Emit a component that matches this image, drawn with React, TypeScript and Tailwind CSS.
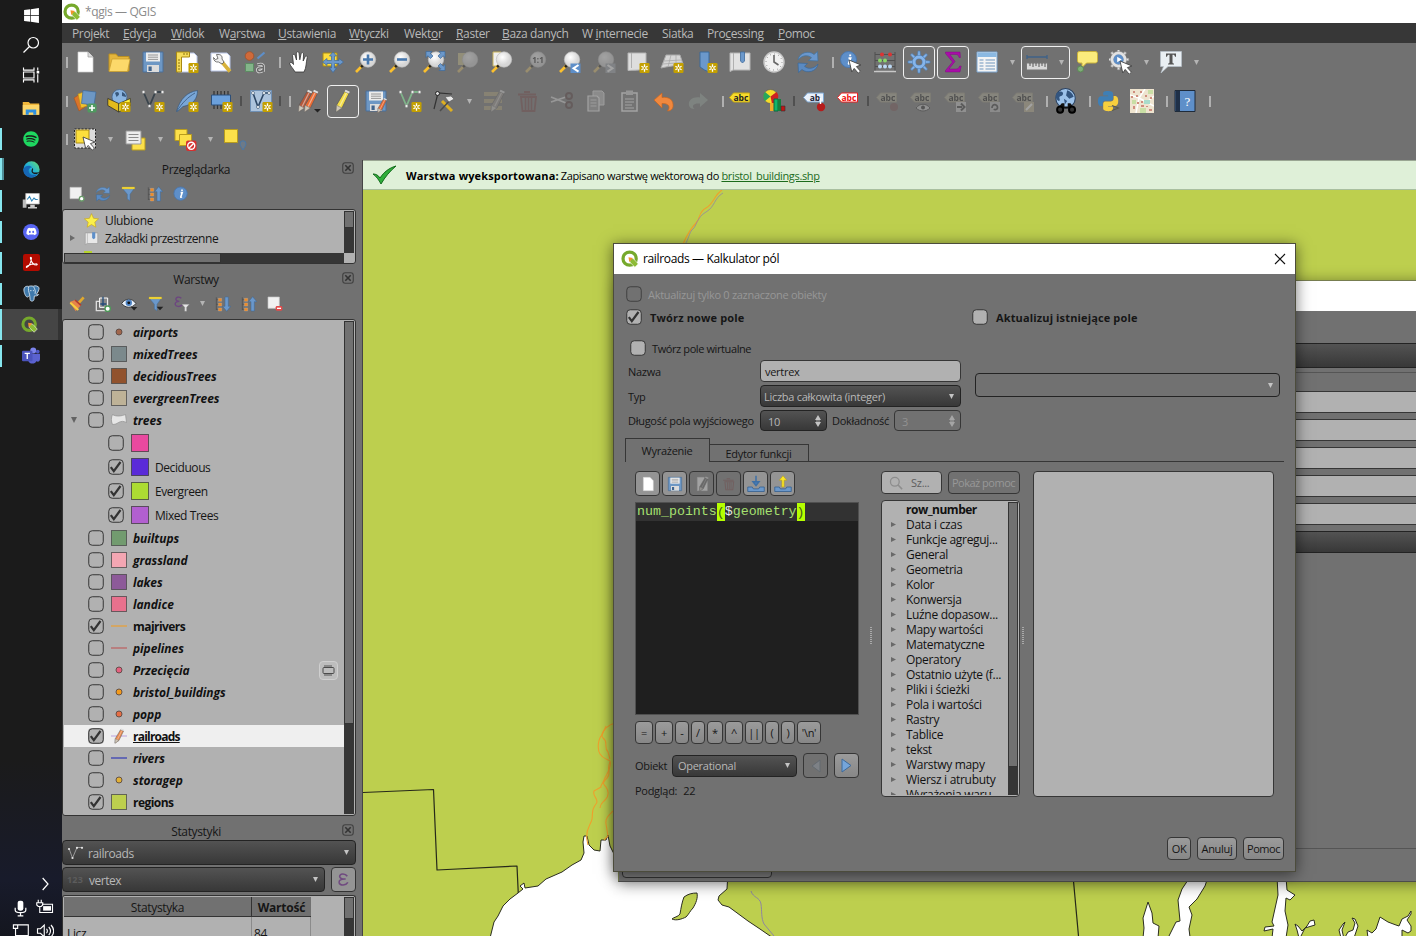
import React from "react";
import { FaSpotify, FaDiscord, FaWindows } from "react-icons/fa";

type Kids = { children?: React.ReactNode };

const S = ({ children, s = 24, dim = false }: Kids & { s?: number; dim?: boolean }) => (
  <svg width={s} height={s} viewBox="0 0 24 24" className={dim ? "shrink-0 opacity-35 grayscale-[.4]" : "shrink-0"} fill="none">
    {children}
  </svg>
);

/* ---------- shared icon parts ---------- */

const Star = ({ x = 13.5, y = 13 }: { x?: number; y?: number }) => (
  <g transform={`translate(${x} ${y})`}>
    <rect width="10" height="10" rx="1.3" fill="#c4a000" />
    <path d="M5 1.3v7.4M1.9 3.2l6.2 3.6M8.1 3.2 1.9 6.8" stroke="#fff" strokeWidth="1.3" />
    <circle cx="5" cy="5" r="1" fill="#c4a000" />
  </g>
);

const Mag = ({ children }: Kids) => (
  <>
    <path d="M8.5 15.5 2 22" stroke="#fbc02d" strokeWidth="2.6" />
    <path d="m7 15.4 1.8 1.8" stroke="#222" strokeWidth="2.4" />
    <circle cx="14" cy="9.5" r="7.7" fill="url(#lens)" stroke="#bcbcbc" strokeWidth=".7" />
    {children}
  </>
);

const Arrow = ({ x = 0, y = 0 }: { x?: number; y?: number }) => (
  <path transform={`translate(${x} ${y})`} d="M10 10l12 5-4.6 1.6 4 4.6-2.2 2-4-4.8-2.4 3.6z" fill="#fff" stroke="#444" strokeWidth=".9" />
);

const Pencil = ({ fill, x = 0 }: { fill: string; x?: number }) => (
  <g transform={`translate(${x} 0)`}>
    <path d="M13.5 2.5 18 4.5 11 19 5 23l.5-6.8z" fill={fill} stroke="#5d5d5d" strokeWidth=".8" />
    <path d="m15.500 3.800-7 14" stroke="#fff" strokeOpacity=".45" strokeWidth="1.200" />
    <path d="m5.500 16.200 5.300 2.800L5 23z" fill="#cfc7b8" stroke="#777" strokeWidth=".6" />
    <path d="m13.500 2.500 4.500 2 .8-1.800-4.200-1.900z" fill="#ddd" />
  </g>
);

const Tag = ({ fill, stroke, color, text }: { fill: string; stroke: string; color: string; text: string }) => (
  <>
    <path d="M1.500 8.500 5.500 4h16v9h-16z" fill={fill} stroke={stroke} strokeWidth="1" />
    <text x="12.900" y="11.500" textAnchor="middle" fontSize="8.500" fontWeight="700" fontFamily="Open Sans, sans-serif" fill={color}>{text}</text>
  </>
);

const RefreshIcon = ({ s }: { s?: number }) => (
  <S s={s}>
    <path d="M2 10C3 2.500 13 0 18 4.500l3.500-3 .5 9.500-9.500-.5 3-2.800C12 4.500 6 5 2 10z" fill="#6a97cc" stroke="#41719e" strokeWidth=".7" />
    <path d="M22 14c-1 7.500-11 10-16 5.500l-3.500 3L2 13l9.500.5-3 2.800C12 19.500 18 19 22 14z" fill="#5a8ac2" stroke="#3b6796" strokeWidth=".7" />
  </S>
);

const QgisLogo = ({ s = 18 }: { s?: number }) => (
  <S s={s}>
    <circle cx="11.500" cy="11.500" r="8.800" stroke="#76a92c" strokeWidth="4.300" />
    <path d="m12 11 4.500.5L23 18.500 18.500 23l-6.800-7z" fill="#8dbb35" stroke="#fff" strokeWidth=".8" />
    <path d="M10 9.500 16 10.500 11 16z" fill="#f0932b" />
  </S>
);

const InfoBall = () => (
  <>
    <circle cx="9.500" cy="9.500" r="8" fill="#5e8fc9" stroke="#4a77ad" />
    <path d="M9.500 8.300h2l-1.800 5.200c-.1.600.5.500 1.300-.2M11.200 4.500v1.800" stroke="#fff" strokeWidth="1.900" />
  </>
);

const Floppy = () => (
  <>
    <path d="M2 2h20v20H2z" fill="#6d97c4" stroke="#4c6f97" />
    <path d="M5 2.500h14v9H5z" fill="#ececec" />
    <path d="M7 5h10M7 7.200h10M7 9.400h10" stroke="#8d8d8d" strokeWidth=".9" />
    <path d="M6 15h12v7H6z" fill="#dcdcdc" />
    <path d="M7.500 16.500h3.200V21H7.500z" fill="#41658e" />
  </>
);

const Page = () => <path d="M5 2h10l5 5v15H5z" fill="#fff" stroke="#d0d0d0" strokeWidth=".7" />;

const VShape = ({ c }: { c: string }) => (
  <>
    <path d="M2.500 3 8.500 17 14.500 3h7" stroke={c} strokeWidth="1.800" />
    <g fill="#eee" stroke="#777" strokeWidth=".5">
      <circle cx="2.500" cy="3" r="1.500" /><circle cx="8.500" cy="17" r="1.500" /><circle cx="14.500" cy="3" r="1.500" /><circle cx="21.500" cy="3" r="1.500" />
    </g>
  </>
);

const Funnel = () => (
  <>
    <path d="M2 3.500h18l-6.500 9V22l-4-2.500v-7z" fill="#6b98cb" stroke="#44709f" strokeWidth=".8" />
    <path d="M1.500 1.500h19v3h-19z" fill="#f5d93a" stroke="#c4a81c" strokeWidth=".5" />
  </>
);

const TreeArrow = ({ down }: { down?: boolean }) => (
  <>
    <path d="M2 2v19M2 5.500h5M2 12.500h5M2 20h5" stroke="#4a4a4a" />
    <path d="M5 3.500h5v4.500H5zM5 10.500h5V15H5zM5 18h5v4.500H5z" fill="#f08a24" stroke="#b9b9b9" strokeWidth=".5" />
    <path transform={down ? "rotate(180 17.500 12)" : undefined} d="m17.500 1 6 7.500h-3.500v14h-5v-14h-3.500z" fill="#6b98cb" stroke="#3d6a9b" strokeWidth=".8" />
  </>
);

const Gear = ({ fill, stroke, r = 5 }: { fill: string; stroke: string; r?: number }) => (
  <g>
    {[0, 45, 90, 135, 180, 225, 270, 315].map((a) => (
      <path key={a} transform={`rotate(${a} 12 12)`} d="M10.500 7 11 1h2l.5 6z" fill={fill} stroke={stroke} strokeWidth=".7" />
    ))}
    <circle cx="12" cy="12" r={r} stroke={stroke} strokeWidth="4" />
    <circle cx="12" cy="12" r={r} stroke={fill} strokeWidth="2.900" />
  </g>
);

const Bin = () => (
  <>
    <path d="M2 5.500h18M8 3h6" stroke="#8c3a3a" strokeWidth="2" />
    <path d="M5 8h15l-1.500 14h-12z" stroke="#8c3a3a" strokeWidth="1.800" />
    <path d="M9.500 9v12M12.500 9v12M15.500 9v12" stroke="#8c3a3a" strokeWidth="1.500" />
  </>
);

/* ---------- toolbar pieces ---------- */

const Cell = ({ children, on }: Kids & { on?: boolean }) => (
  <div className={on ? "flex h-[33px] w-8 mx-px shrink-0 items-center justify-center rounded border border-[#f0f0f0]" : "flex w-[34px] shrink-0 items-center justify-center"}>{children}</div>
);
const G0 = () => <div className="flex w-1.5 shrink-0 justify-end"><i className="block h-[11px] w-[2px] bg-[#b0b0b0]" /></div>;
const G1 = () => <div className="flex w-2 shrink-0 justify-end"><i className="block h-[11px] w-[2px] bg-[#b0b0b0]" /></div>;
const Dark = () => <div className="flex w-1.5 shrink-0 justify-center"><i className="block h-[10px] w-[2px] bg-[#505050]" /></div>;
const DD = () => (
  <div className="flex w-4 shrink-0 justify-center">
    <svg width="5" height="5" viewBox="0 0 5 5"><path d="M0 0h5L2.500 5z" fill="#b4b4b4" /></svg>
  </div>
);

const RowOne = () => (
  <div className="flex h-[38px] items-center">
    <G0 />
    <Cell><S><Page /><path d="M15 2v5h5" fill="#ddd" stroke="#999" strokeWidth=".7" /></S></Cell>
    <Cell><S><path d="M2 4h7l2 2.500h11V21H2z" fill="#e4b53c" stroke="#b98f23" /><path d="M5 9h18l-2.500 12.500H2z" fill="#fcd96a" stroke="#c79c2d" strokeWidth=".7" /></S></Cell>
    <Cell><S><Floppy /></S></Cell>
    <Cell><S><path d="M3 3h16l3 3v16H3z" fill="#fff" stroke="#b9c6e8" /><path d="M1.500 2h13v5h-8v15h-5z" fill="#f5dc5a" stroke="#a98a12" /><path d="M3 10h2M3 13h2M3 16h2M3 19h2M9 3v2M12 3v2" stroke="#8a7010" /><Star /></S></Cell>
    <Cell><S><path d="M2 3h16l3 3v15H2z" fill="#fff" stroke="#b9c6e8" /><path d="m13 12 8 9.500" stroke="#d8b23b" strokeWidth="3.600" /><path d="M7.500 4.500 9 8.500l-2.500 1-2-2c0 3 2 5 5 4.500l3.500 2 2-2-2-3c.5-3-1-5-5.500-4.500z" fill="#eee" stroke="#555" strokeWidth=".8" /></S></Cell>
    <Cell><S><circle cx="6.500" cy="6" r="4.300" fill="#cf6a3a" stroke="#a34c22" strokeWidth=".7" /><path d="m14.500 8.500 7-6" stroke="#5e8fc9" strokeWidth="2.200" /><path d="M2.500 13.500h8v8h-8z" fill="#83b58a" stroke="#5d8c63" /><path d="M14.500 14.800c4-1.300 6-.4 6 2v5M20.500 17.800c-4-.5-6.300.5-6 2.300.5 2.400 4 2 6-.6" stroke="#d8d8d8" strokeWidth="3" /><path d="M14.500 14.800c4-1.300 6-.4 6 2v5M20.500 17.800c-4-.5-6.300.5-6 2.300.5 2.400 4 2 6-.6" stroke="#666" strokeWidth="1.500" /></S></Cell>
    <div className="flex w-2.5 shrink-0 justify-end pr-px"><i className="block h-[11px] w-[2px] bg-[#b0b0b0]" /></div>
    <Cell><S><path d="M8 22c-2-4-5-6-5.500-9 1.200-1.300 2.700-.2 4 1.500L5.500 5.500c.5-1.600 2-1.500 2.600 0L9.500 10 9.300 2.800c.8-1.500 2.200-1.300 2.700 0l.8 7 1.400-6.500c1-1.200 2.300-.8 2.400.6L16.200 11l2-4.500c1-1 2.200-.4 2 1-1.200 5-.7 10-3.200 14.500z" fill="#fff" stroke="#333" strokeWidth=".8" /></S></Cell>
    <Cell><S><path d="M2 3h14v13H2z" fill="#fcdc3c" stroke="#a98a12" /><path d="m12 2 3.500 4h-2v4.500H18v-2l4.500 3.500-4.500 3.500v-2h-4.500V18h2L12 22.500 8.500 18h2v-4.500H6v2L1.500 12 6 8.500v2h4.500V6h-2z" fill="#6b98cb" stroke="#3d6a9b" strokeWidth=".7" /></S></Cell>
    <div className="-ml-px" />
    <Cell><S><Mag><path d="M14 4.500v10M9 9.500h10" stroke="#4878ad" strokeWidth="2.600" /></Mag></S></Cell>
    <Cell><S><Mag><path d="M9 9.500h10" stroke="#4878ad" strokeWidth="2.600" /></Mag></S></Cell>
    <Cell><S><Mag><path d="M4 1.500h6L8.200 3.300 11 6 8.500 8.500 5.800 5.700 4 7.500zM23 1.500v6l-1.800-1.800L18.500 8.500 16 6l2.700-2.700L17 1.500zM23 20.500h-6l1.800-1.800L16 16l2.500-2.500 2.700 2.700L23 14.500z" fill="#6b98cb" stroke="#3d6a9b" strokeWidth=".7" /></Mag></S></Cell>
    <Cell><S dim><path d="M2 3h9v12H2z" fill="#d8c860" /><Mag /></S></Cell>
    <Cell><S><path d="M3 2h8v14H3z" fill="#eee" stroke="#c9b45c" /><Mag /></S></Cell>
    <Cell><S dim><Mag><text x="14" y="12.500" textAnchor="middle" fontSize="8" fontWeight="700" fontFamily="Open Sans, sans-serif" fill="#222">1:1</text></Mag></S></Cell>
    <Cell><S><Mag /><path d="M12.500 13.500h10v9.500h-10z" fill="#5e8fc9" /><path d="m20.500 15-5 3.300 5 3.300" stroke="#fff" strokeWidth="2" /></S></Cell>
    <Cell><S dim><Mag /><path d="M13.500 13.500h10v9.500h-10z" fill="#9aa4b0" /><path d="m15.500 15 5 3.300-5 3.300" stroke="#fff" strokeWidth="2" /></S></Cell>
    <Cell><S><path d="M2 3h18v16c-7 1.500-13 1-18 1.500z" fill="#dedede" stroke="#b5b5b5" /><path d="M5.500 3v15" stroke="#b0b0b0" /><Star /></S></Cell>
    <Cell><S><path d="M6 5h14l3 9c-7 2-14 2-22 4z" fill="#d6d6d6" stroke="#aaa" /><path d="m4 11 17-1M3 14l19-1.500M11 5 8 17M16 5v11" stroke="#aaa" strokeWidth=".8" /><Star /></S></Cell>
    <Cell><S><path d="M6 2h9v20l-4.500-2L6 17z" fill="#6b98cb" stroke="#3d6a9b" /><Star /></S></Cell>
    <Cell><S><path d="M2 3h20v17H5l-3 1.500z" fill="#e2e2e2" stroke="#b5b5b5" /><path d="M5.500 3v17" stroke="#b0b0b0" /><path d="M12.500 2h4v9l-2 2-2-2z" fill="#6b98cb" stroke="#3d6a9b" strokeWidth=".8" /></S></Cell>
    <Cell><S><circle cx="12" cy="12" r="10" fill="#f1f1f1" stroke="#c8c8c8" strokeWidth="1.500" /><circle cx="12" cy="12" r="8" stroke="#777" strokeWidth="1" strokeDasharray=".8 3.390" /><path d="M12 5v7l4.500 3" stroke="#666" strokeWidth="1.600" /></S></Cell>
    <Cell><RefreshIcon /></Cell>
    <div className="w-px" />
    <G1 />
    <Cell><S><InfoBall /><Arrow /></S></Cell>
    <Cell><S><path d="M2 2v20M22 2v20M2 4.500h20M2 10.500h20M2 16.500h20" stroke="#505050" /><g fill="#d33"><circle cx="9" cy="4.500" r="2" /><circle cx="17" cy="4.500" r="2" /></g><g fill="#8bd66a"><circle cx="7" cy="10.500" r="2" /><circle cx="12" cy="10.500" r="2" /></g><g fill="#bcd9f5"><circle cx="7" cy="16.500" r="2" /><circle cx="12" cy="16.500" r="2" /><circle cx="17" cy="16.500" r="2" /></g><path d="M1 21.500h22" stroke="#c9c9c9" strokeWidth="1.500" /></S></Cell>
    <Cell on><S><Gear fill="#86b5ea" stroke="#4f7fb5" /></S></Cell>
    <Cell on><S><path d="M4.500 2H19l.5 5.500h-1.500c-.5-2-1-3-3-3H9l5 7-6 7.500h7c2 0 3-1 3.700-3h1.500L19 22H4.500v-1.500L11.500 12l-7-8.500z" fill="#a80da8" stroke="#7a077a" strokeWidth=".4" /></S></Cell>
    <Cell><S><path d="M2 2h20v20H2z" fill="#f4f4f4" stroke="#7da6d1" /><path d="M2.500 2.500h19V7h-19z" fill="#8bb9e2" /><path d="M4.500 10h4M4.500 13h4M4.500 16h4M4.500 19h4M10.500 10h9.500M10.500 13h9.500M10.500 16h9.500M10.500 19h9.500" stroke="#6f95be" strokeWidth="1.200" /></S></Cell>
    <DD />
    <div className="ml-px flex h-[33px] w-[49px] items-center justify-between rounded border border-[#f0f0f0] pl-[3px]">
      <S><path d="M2 7h20M2 5v4M22 5v4" stroke="#3f6288" strokeWidth="1.300" /><path d="M1.500 13h21v7h-21z" fill="#d8d8d8" stroke="#777" /><path d="M5 13v3M8 13v4M11 13v3M14 13v4M17 13v3M20 13v4" stroke="#555" /></S>
      <DD />
    </div>
    <Cell><S><path d="M5 1.500h15c2 0 2.500 1 2.500 3v6c0 2-1 2.500-3 2.500h-8L7 17.500V13H5c-2 0-2.500-1-2.500-3V4c0-2 .5-2.500 2.500-2.500z" fill="#fbec7c" stroke="#c9b23a" /><circle cx="5.500" cy="19" r="3" fill="#7fae78" stroke="#5c8a56" /></S></Cell>
    <Cell><S><g transform="translate(-1.500 -1.500) scale(.92)"><Gear fill="#e2e2e2" stroke="#a9a9a9" r={7} /><circle cx="12" cy="12" r="5.500" fill="#5e8fc9" /><path d="m10.500 9 5 3-5 3z" fill="#fff" /></g><Arrow x={1} y={1} /></S></Cell>
    <DD />
    <Cell><S><path d="M1.500 1.500h21v15H9l-7 6.500 2.500-6.500h-3z" fill="#e9eff3" stroke="#b7c2ca" strokeWidth=".7" /><path d="M7 3.500h10v3.200h-1c-.3-1.500-.8-2-2.500-2V12c0 1.200.3 1.500 1.500 1.500v1H9v-1c1.200 0 1.500-.3 1.500-1.500V4.700C8.800 4.700 8.300 5.200 8 6.700H7z" fill="#555" /></S></Cell>
    <DD />
  </div>
);

const dimTag = <Tag fill="#b3ab86" stroke="#99916c" color="#111" text="abc" />;

const RowTwo = () => (
  <div className="flex h-[39px] items-center pt-px">
    <G0 />
    <Cell><S><path d="m1 9 6-4 5 13-6 4z" fill="#d9742b" stroke="#a9531a" strokeWidth=".6" /><path d="m5 5 6-2 3 14-6 2z" fill="#f2c12e" stroke="#b58c18" strokeWidth=".6" /><path d="m10 1.500 13 1.500-2 13-12.500-1.500z" fill="#6d97c4" stroke="#3d6a9b" strokeWidth=".7" /><rect x="14.500" y="14.500" width="9" height="9" rx="1.500" fill="#4f9a60" /><path d="M19 16v6M16 19h6" stroke="#fff" strokeWidth="1.600" /></S></Cell>
    <Cell><S><circle cx="12.500" cy="8" r="7.500" fill="#8ab4e0" stroke="#3f5f85" strokeWidth=".7" /><path d="M8 4c2-2 4-1 4 1s-3 2-2 4zM15 3c3 1 4 3 4 5l-4-1z" fill="#38587d" /><path d="m.8 9.500 11 5v8.500l-11-6.500z" fill="#e2bb1d" stroke="#222" strokeWidth=".7" /><path d="m11.800 14.500 11.500-5v7.500l-11.500 6z" fill="#fff23d" stroke="#222" strokeWidth=".7" /><Star /></S></Cell>
    <Cell><S><VShape c="#3a444c" /><Star /></S></Cell>
    <Cell><S><path d="M1.500 22.500C5 10 12 3 22.500 1.500c0 8-4 14-14.500 16l-5.500 5z" fill="#79a7d8" stroke="#37567a" strokeWidth=".7" /><path d="M2 22C7 14 13 8 20 4" stroke="#37567a" strokeWidth=".8" /><Star /></S></Cell>
    <Cell><S><path d="M5 2v18M8.500 2v18M12 2v18M15.500 2v18M19 2v18" stroke="#333" strokeWidth="1.200" /><path d="M2.500 6h19v10h-19z" fill="#6ba0dc" stroke="#2d4f78" /><Star /></S></Cell>
    <Dark />
    <Cell><S><path d="M1.500 1.500h21v21h-21z" fill="#adc4dd" stroke="#6f90b5" /><path d="M4 4 9 18 15 4h5" stroke="#2e4866" strokeWidth="1.600" /><g fill="#fff" stroke="#2e4866" strokeWidth=".6"><circle cx="4" cy="4" r="1.500" /><circle cx="9" cy="18" r="1.500" /><circle cx="15" cy="4" r="1.500" /><circle cx="20" cy="4" r="1.500" /></g><Star /></S></Cell>
    <div className="flex w-3.5 shrink-0 items-center justify-between pl-px pr-px"><i className="block h-[10px] w-[2px] bg-[#505050]" /><i className="block h-[11px] w-[2px] bg-[#b0b0b0]" /></div>
    <Cell><S><Pencil fill="#b5583a" x={-3.500} /><Pencil fill="#ea6a33" x={2.500} /><path d="M17 20h7l-3.500 3.500z" fill="#222" /></S></Cell>
    <Cell on><S><Pencil fill="#f3dc45" /></S></Cell>
    <div className="-ml-px" />
    <Cell><S><Floppy /><g transform="translate(8.500 8.500) scale(.66)"><Pencil fill="#ea6a33" x={3} /></g></S></Cell>
    <Cell><S><VShape c="#7fb48a" /><Star /></S></Cell>
    <Cell><S><path d="m2 20 4-16 14 1" stroke="#333" strokeWidth="1.200" /><circle cx="5.500" cy="4.500" r="2" fill="#ddd" stroke="#222" /><path d="m10 12 10 10" stroke="#dfb020" strokeWidth="3" /><path d="M20 9 8 22" stroke="#4c4c4c" strokeWidth="1.500" /><path d="m13 8 6-1 3 3-5 3z" fill="#e8e8e8" stroke="#555" strokeWidth=".6" /></S></Cell>
    <DD />
    <Cell><S dim><path d="M2 3h18v4H2zM2 10h18v4H2zM2 17h18v4H2z" fill="#b9a35a" /><Pencil fill="#9d9186" x={4} /></S></Cell>
    <Cell><S dim><Bin /></S></Cell>
    <Cell><S dim><path d="m1 8 15 6M1 13l15-5" stroke="#ddd" strokeWidth="1.800" /><circle cx="19" cy="7" r="3" stroke="#5b3535" strokeWidth="2" /><circle cx="19" cy="16" r="3" stroke="#5b3535" strokeWidth="2" /></S></Cell>
    <Cell><S dim><path d="M9 2h9l2 2v12H9z" fill="#bbb" stroke="#eee" /><path d="M4 7h9l2 2v13H4z" fill="#999" stroke="#fff" strokeWidth="1.200" /><path d="M6.500 11h6M6.500 14h6M6.500 17h6" stroke="#eee" /></S></Cell>
    <Cell><S dim><path d="M4 4h15v18H4z" fill="#777" stroke="#fff" strokeWidth="1.500" /><path d="M8 1.500h7V6H8z" fill="#ddd" /><path d="M7 10h9M7 13h9M7 16h7M7 19h9" stroke="#fff" strokeWidth="1.200" /></S></Cell>
    <Cell><S><path d="m2 11 8-7v4.500c7-1 12 2.500 11 9.500-.5 2.500-3 4-5.500 4 3.500-4 1-8-5.500-7.500V19z" fill="#f0883e" stroke="#c96520" strokeWidth=".7" /></S></Cell>
    <Cell><S dim><path d="m22 11-8-7v4.500c-7-1-12 2.500-11 8 .5 2.500 3 3.500 5.500 3.500-3.500-3-1-6 5.500-5.500V18z" fill="#8fa898" /></S></Cell>
    <div className="w-px" />
    <G1 />
    <div className="-ml-px" />
    <Cell><S><Tag fill="#f7dc2a" stroke="#c9ab14" color="#222" text="abc" /></S></Cell>
    <Cell><S><circle cx="8.500" cy="7.500" r="7" fill="#f7dc2a" stroke="#555" strokeWidth=".6" /><path d="M8.500 7.500 3 12A7 7 0 0 1 3 3z" fill="#26a65b" /><path d="m8.500 7.500 6-4.500A7 7 0 0 1 10 14.500z" fill="#cf2020" /><path d="M8 14h4v8H8z" fill="#f0a92a" /><path d="M12 10h4v12h-4z" fill="#0fb56a" stroke="#0b6b3e" /><path d="M16 10h3v12h-3z" fill="#15803d" /><path d="M19 17h4v5h-4z" fill="#c01515" stroke="#333" strokeWidth=".6" /></S></Cell>
    <Dark />
    <Cell><S><Tag fill="#e9f1fb" stroke="#7da6d1" color="#223" text="ab" /><circle cx="19" cy="18" r="4.200" fill="#b51c1c" /><path d="M18.500 9v6" stroke="#fff" strokeWidth="1.500" /></S></Cell>
    <Cell><S><Tag fill="#fff" stroke="#f02020" color="#f01010" text="abc" /></S></Cell>
    <div className="flex w-[5px] shrink-0 justify-center"><i className="block h-[10px] w-[2px] bg-[#505050]" /></div>
    <Cell><S dim>{dimTag}<circle cx="19" cy="18" r="4" fill="#8a4a4a" /></S></Cell>
    <Cell><S dim>{dimTag}<path d="M7 19c4-5 10-5 14 0-4 4-10 4-14 0z" fill="#ccc" stroke="#333" /><circle cx="14" cy="18.500" r="2" fill="#222" /></S></Cell>
    <Cell><S dim>{dimTag}<path d="M13 13h10v10H13z" fill="#ccc" /><path d="M14 18h5m-1-3.500 3.500 3.500-3.500 3.500" stroke="#333" strokeWidth="2" /></S></Cell>
    <Cell><S dim>{dimTag}<path d="M13 13h10v10H13z" fill="#bbb" /><path d="M15 19c0-5 6-4 5.500 0-.5 2-3 2-3.500 1" stroke="#333" strokeWidth="1.700" /></S></Cell>
    <Cell><S dim>{dimTag}<path d="M13 13h10v10H13z" fill="#c4b278" /><path d="m15 21 6-6" stroke="#fff" strokeWidth="2" /></S></Cell>
    <G1 />
    <Cell><S s={26}><circle cx="12.500" cy="9.500" r="9" fill="#9cc2ea" stroke="#2b4261" /><path d="M5 4c4-2 6 0 5 2S6 7 7 10s-2 2-3 0-1-4 1-6zM14 2c3 1 5 3 6 6l-4 2-3-3zM11 10l3 2-2 3z" fill="#33557f" /><path d="m9 14-4 5h16l-4-5h-2.500v3h-3v-3z" fill="#111" /><g fill="#333" stroke="#000" strokeWidth="1.800"><circle cx="7.500" cy="20" r="2.800" /><circle cx="18.500" cy="20" r="2.800" /></g></S></Cell>
    <div className="w-px" />
    <G1 />
    <Cell>
      <S>
        {["#3f7fb5", "#f7cf3d"].map((c, i) => (
          <path key={c} fill={c} transform={i ? "translate(2 2) scale(.84) rotate(180 12 12)" : "translate(2 2) scale(.84)"} d="M14.250.18l.9.2.73.26.59.3.45.32.34.34.25.34.16.33.1.3.04.26.02.2-.01.13V8.500l-.05.63-.13.55-.21.46-.26.38-.3.31-.33.25-.35.19-.35.14-.33.1-.3.07-.26.04-.21.02H8.770l-.69.05-.59.14-.5.22-.41.27-.33.32-.27.35-.2.36-.15.37-.1.35-.07.32-.04.27-.02.21v3.060H3.170l-.21-.03-.28-.07-.32-.12-.35-.18-.36-.26-.36-.36-.35-.46-.32-.59-.28-.73-.21-.88-.14-1.050-.05-1.230.06-1.220.16-1.040.24-.87.32-.71.36-.57.4-.44.42-.33.42-.24.4-.16.36-.1.32-.05.24-.01h.16l.06.01h8.160v-.83H6.180l-.01-2.750-.02-.37.05-.34.11-.31.17-.28.25-.26.31-.23.38-.2.44-.18.51-.15.58-.12.64-.1.71-.06.77-.04.84-.02 1.270.05z" />
        ))}
        <path d="m16 16.500 6.500 2.500-6.500 2.500" stroke="#5a5a4a" strokeWidth="1.300" />
      </S>
    </Cell>
    <Cell><S><path d="M0 0h24v24H0z" fill="#eee4cf" /><path d="M0 6 9 9l6-9M9 9l-3 15M9 9l15 8M17 13l7-6" stroke="#fff" strokeWidth="1.500" /><path d="M2 11h4v4H2zM18 1h5v4h-5zM10 19h6v5h-6z" fill="#c9dfa5" /><path d="M14 11h6v4h-6z" fill="#a9dccb" /><path d="M3 2h2v2H3zM11 16h3v2h-3zM10 2h2v2h-2zM19 20h3v2h-3zM6 6h2v2H6zM15 6h2v2h-2zM3 17h2v3H3zM20 8h2v2h-2zM11 12h2v2h-2zM7 13h2v2H7zM1 7h2v2H1zM16 17h2v1h-2z" fill="#cf8d7e" /></S></Cell>
    <div className="w-px" />
    <G1 />
    <Cell><S><path d="M2 1.500h20v21H2z" fill="#5e8fc9" stroke="#1f2b3a" /><path d="M2.500 2h4.500v20H2.500z" fill="#1f3048" /><text x="14.500" y="16.500" textAnchor="middle" fontSize="13" fontFamily="Liberation Serif, serif" fill="#fff">?</text></S></Cell>
    <div className="w-px" />
    <G1 />
  </div>
);

const RowThree = () => (
  <div className="flex h-[38px] items-center">
    <G0 />
    <Cell><S><path d="M1.500 2h21v19h-21z" fill="#dcdcdc" stroke="#222" strokeDasharray="2 1.500" /><path d="M3 3h13v13H3z" fill="#fcdf3c" stroke="#a98a12" /><Arrow /></S></Cell>
    <DD />
    <Cell><S><path d="M9 11h13v12H9z" fill="#fce04a" stroke="#b89c1d" /><path d="M3 4h15v13H3z" fill="#ececec" stroke="#999" /><path d="M5.500 7.500h10M5.500 10.500h10M5.500 13.500h10" stroke="#8b8b8b" strokeWidth="1.200" /></S></Cell>
    <DD />
    <Cell><S><path d="M2 2.500h12v11H2z" fill="#fce04a" stroke="#b89c1d" /><path d="M6.500 7.500h12v11h-12z" fill="#fce04a" stroke="#b89c1d" /><rect x="13" y="13.500" width="10.500" height="10.500" rx="2" fill="#d63030" /><circle cx="18.250" cy="18.700" r="3.500" stroke="#fff" strokeWidth="1.400" /><path d="m15.800 21.200 5-5" stroke="#fff" strokeWidth="1.400" /></S></Cell>
    <DD />
    <Cell><S><path d="M1.500 2.500h13v13h-13z" fill="#fce04a" stroke="#b89c1d" /><path d="M20 23c-2.500-4-3-5-3-6.200a3 3 0 0 1 6 0c0 1.200-.5 2.200-3 6.200z" fill="#6d7a88" stroke="#4a78a8" /></S></Cell>
  </div>
);

/* ---------- taskbar ---------- */

const Task = ({ children, strip, active }: Kids & { strip?: boolean; active?: boolean }) => (
  <div className={active ? "flex h-[31px] items-center border-r-4 border-[#333] bg-[#454545]" : "flex h-[31px] items-center"}>
    <i className={strip ? (active ? "block h-[31px] w-[2px] bg-[#86e6ee]" : "block h-[22px] w-[2px] bg-[#86e6ee]") : "block w-[2px]"} />
    <div className="flex w-[58px] justify-center">{children}</div>
  </div>
);

const Taskbar = () => (
  <div className="flex w-[62px] shrink-0 flex-col bg-[linear-gradient(180deg,#1b1b1b_0,#1b1b1b_760px,#181b2b_880px,#14161f_936px)] text-white">
    <div className="flex h-[30px] items-center justify-center"><FaWindows size={17} /></div>
    <div className="flex h-[30px] items-center justify-center"><S s={18}><circle cx="15" cy="9" r="7" stroke="#fff" strokeWidth="1.600" /><path d="m10 14-8 8" stroke="#fff" strokeWidth="1.600" /></S></div>
    <div className="flex h-[30px] items-center justify-center pb-px"><S s={18}><path d="M2 2v3.500h14V2M2 22v-3.500h14V22M2 8h14v8H2zM21 2v4M21 11v11" stroke="#fff" strokeWidth="1.500" /><path d="M19.500 6.500h3.500V10h-3.500z" fill="#fff" /></S></div>
    <div className="h-[2px]" />
    <Task><S s={18}><path d="M1 4h8l2 2h12v15H1z" fill="#f0b63a" /><path d="M1 8h22v13H1z" fill="#fcd669" /><path d="M5 21v-7h14v7h-4v-3H9v3z" fill="#2f8fdd" /></S></Task>
    <Task strip><FaSpotify size={16} color="#1ed760" /></Task>
    <div className="flex"><i className="mt-[4px] block h-[22px] w-[2px] bg-[#86e6ee]" /><i className="mt-[4px] -mr-[2px] block h-[22px] w-[2px] bg-[#4e8f98]" /><div className="flex h-[31px] w-[58px] items-center justify-center"><S s={17}><circle cx="12" cy="12" r="11.500" fill="url(#edge)" /><path d="M.5 12C2 6 10 5 13 9c-4 0-5 3-5 5 0 5 6 7 13 4.500C17 24 9 25 4 20.500 1.500 18 .5 15 .5 12z" fill="#1667b5" /><path d="M13.500 10c2 2-.5 4 .5 5 1.500 1.800 6 1.500 9 0-1 2-3 3.500-5 3.500-5 .3-8-3.500-4.500-8.500z" fill="#1b1b1b" /></S></div></div>
    <Task strip><S s={18}><path d="M1 10h5v11H1z" fill="#bbb" /><path d="M5 2h18v14H5z" fill="#fff" stroke="#bbb" /><path d="m7 10 3-4 3 6 3-4 2 2h3" stroke="#3186b8" strokeWidth="1.500" /><path d="M11 17h6v3h3v2H8v-2h3z" fill="#c9c9c9" /></S></Task>
    <Task strip><div className="flex size-4 items-center justify-center rounded-full bg-[#5865f2]"><FaDiscord size={11} color="#fff" /></div></Task>
    <Task strip><S s={17}><rect width="24" height="24" rx="3" fill="#b30b00" /><path d="M5 19c3-1 6-7 7-13 0-2-2-2-1.500 0C12 12 15 15.500 19 15.500c2-.5 1-2-1-1.800-4 0-8 1-12 3.300-1.500 1-1.500 2-1 2z" stroke="#fff" strokeWidth="1.500" /></S></Task>
    <Task strip><S s={17}><path d="M8 2C3 1 .5 4 1.500 9c.8 4 3 8.500 5 8 1 0 1.500-1.500 3-2.500l.5 6c.3 3 5 3 5.500 0l.5-5c2 0 5 0 6-2-2 .5-3 0-3-.5 3-4 5-9 2.500-10.500C18.500.5 16 1 14.500 1.800 12 1.200 10 1.200 8 2z" fill="#3f79ab" stroke="#cfdde9" strokeWidth="1.300" /><path d="M8 2.500C7 6 8 9 9.500 14M15 2.500c2 4 3 6 2 10M10 8h2M14 8h1.500" stroke="#dce8f2" strokeWidth="1.200" /></S></Task>
    <Task strip active><QgisLogo s={17} /></Task>
    <Task strip><S s={18}><circle cx="15" cy="4.500" r="4" fill="#7b83eb" /><circle cx="21" cy="6" r="2.500" fill="#5059c9" /><path d="M8 9h16v7c0 4-3 4-5 3-1 4-10 5-11-2z" fill="#5b62d0" /><rect y="5" width="14" height="14" rx="1.500" fill="#4b53bc" /><path d="M3.500 8.500h7M7 8.500v7.500" stroke="#fff" strokeWidth="1.800" /></S></Task>
    <div className="grow" />
    <div className="flex h-6 justify-end pr-[8px] pt-[4px]"><S s={16}><path d="m7 3 8 9-8 9" stroke="#fff" strokeWidth="1.800" /></S></div>
    <div className="flex h-6 items-center justify-between pl-3 pr-2">
      <S s={17}><rect x="8" y="1" width="8" height="14" rx="3" fill="#fff" /><path d="M4.500 11v3c0 5 15 5 15 0v-3M12 18v4M8 22.500h8" stroke="#fff" strokeWidth="1.700" /></S>
      <S s={18}><path d="M8 7h14v11H5v-5M3 1v4M7 1v4M1 5h8v3l-2 2H3L1 8zM5 10v3" stroke="#fff" strokeWidth="1.500" /><path d="M9.500 9.500H20v6H9.500z" fill="#fff" /></S>
    </div>
    <div className="flex h-[16px] items-start justify-between overflow-hidden pl-3 pr-2 pt-[2px]">
      <S s={17}><path d="M7 4h16v15H5v-7M10 23h8M2 4h6v5H2zM5 9v4" stroke="#fff" strokeWidth="1.600" /></S>
      <S s={18}><path d="M2 9h4l5-5v16l-5-5H2zM14 9c1.500 2 1.500 4 0 6M17 6.500c3 3.500 3 7.500 0 11M20 4c4.500 5 4.500 11 0 16" stroke="#fff" strokeWidth="1.500" /></S>
    </div>
  </div>
);

/* ---------- left dock ---------- */

const Check = ({ on, plain, faded }: { on?: boolean; plain?: boolean; faded?: boolean }) => (
  <svg width="16" height="16" viewBox="0 0 16 16" className="shrink-0" fill="none">
    <rect x=".75" y=".75" width="14.500" height="14.500" rx="3.500" stroke={faded ? "#404040" : "#363636"} fill={plain ? "#b1b1b1" : "none"} />
    {on && <path d="m2.800 8.200 3 4L12.500 3" stroke="#333" strokeWidth="2.200" />}
  </svg>
);

const DockTitle = ({ children }: Kids) => (
  <div className="flex h-[18px] w-[294px] shrink-0 items-center pt-0.5">
    <span className="grow pr-[12px] text-center">{children}</span>
    <svg width="12" height="12" viewBox="0 0 12 12" className="mb-1 mr-[2px]" fill="none"><rect x=".75" y=".75" width="10.500" height="10.500" rx="2.500" stroke="#404040" strokeWidth="1.100" /><path d="m3.300 3.300 5.400 5.400m0-5.400L3.300 8.700" stroke="#333" strokeWidth="1.600" /></svg>
  </div>
);

type Layer = { n: string; k: "dot" | "box" | "line" | "poly" | "edit"; c: string; on?: boolean; plain?: boolean; sel?: boolean; mem?: boolean };
const top: Layer[] = [
  { n: "airports", k: "dot", c: "#a1664c" },
  { n: "mixedTrees", k: "box", c: "#7b898c" },
  { n: "decidiousTrees", k: "box", c: "#91522d" },
  { n: "evergreenTrees", k: "box", c: "#beb297" },
  { n: "trees", k: "poly", c: "#eee" },
];
const kids = [
  { n: "", c: "#e9499f", on: false },
  { n: "Deciduous", c: "#5a2ad8", on: true },
  { n: "Evergreen", c: "#acdc32", on: true },
  { n: "Mixed Trees", c: "#b25fd0", on: true },
];
const rest: Layer[] = [
  { n: "builtups", k: "box", c: "#729b6f" },
  { n: "grassland", k: "box", c: "#f3a6b2" },
  { n: "lakes", k: "box", c: "#8d5a99" },
  { n: "landice", k: "box", c: "#e8718d" },
  { n: "majrivers", k: "line", c: "#d9a55c", on: true, plain: true },
  { n: "pipelines", k: "line", c: "#b97a7a" },
  { n: "Przecięcia", k: "dot", c: "#e5607f", mem: true },
  { n: "bristol_buildings", k: "dot", c: "#f49b1b" },
  { n: "popp", k: "dot", c: "#e66e45" },
  { n: "railroads", k: "edit", c: "#d5c8e6", on: true, plain: true, sel: true },
  { n: "rivers", k: "line", c: "#5c61b4" },
  { n: "storagep", k: "dot", c: "#e2b135" },
  { n: "regions", k: "box", c: "#bdcf4e", on: true, plain: true },
];

const Symbol = ({ l }: { l: Layer }) => (
  <svg width="16" height="16" viewBox="0 0 16 16" className="ml-[7px] mr-1.5 shrink-0" fill="none">
    {l.k === "dot" && <circle cx="8" cy="8" r="3" fill={l.c} stroke="#5a4a44" strokeWidth=".9" />}
    {l.k === "box" && <rect x=".5" y=".5" width="15" height="15" fill={l.c} stroke="#454545" strokeOpacity=".75" />}
    {l.k === "line" && <path d="M0 8h16" stroke={l.c} strokeWidth="1.800" />}
    {l.k === "poly" && <path d="M1.500 2.500c4 2.500 9 1.500 13 0l1 8c-3-1.500-5-1.500-8 0-2 1.500-4 2-6 2-1.500-3-1.500-7 0-10z" fill="#e6e6e6" stroke="#8f8f8f" strokeWidth=".7" />}
    {l.k === "edit" && <><path d="M0 8h16" stroke={l.c} strokeWidth="2" /><g transform="scale(.66)"><Pencil fill="#ea8a4f" x={1} /></g></>}
  </svg>
);

const LayerRow = ({ l, open }: { l: Layer; open?: boolean }) => (
  <div className={l.sel ? "flex h-[22px] items-center bg-[#efefef]" : "flex h-[22px] items-center"}>
    <div className="flex w-[24px] shrink-0 pl-[7px]">{open && <svg width="6" height="6" className="shrink-0"><path d="M0 0h6L3 6z" fill="#636363" /></svg>}</div>
    <span className={l.sel ? "rounded bg-[#b1b1b1]" : ""}><Check on={l.on} /></span>
    <Symbol l={l} />
    <span className={l.plain ? (l.sel ? "grow pt-[2px] font-bold tracking-[-0.780px] text-[#111] underline" : "grow pt-[2px] font-bold tracking-[-0.550px] text-[#111]") : "grow pt-[2px] font-bold tracking-[-0.050px] text-[#111] italic"}>{l.n}</span>
    {l.mem && <span className="mr-1.5 flex size-[19px] items-center justify-center rounded-sm border border-[#cfcfcf] bg-[#bdbdbd]"><svg width="13" height="13" viewBox="0 0 13 13" fill="none"><rect x="1" y="3.500" width="11" height="6" rx="1" stroke="#4b4b4b" /><path d="M3 1v2M5 1v2M7 1v2M9 1v2M3 10v2M5 10v2M7 10v2M9 10v2" stroke="#555" /></svg></span>}
  </div>
);

const combo = "flex items-center rounded border border-[#232323] bg-linear-to-b from-[#535353] to-[#383838] text-[#b8b8b8]";
const Tri = () => <svg width="5" height="5" className="shrink-0"><path d="M0 0h5L2.500 5z" fill="#c4c4c4" /></svg>;

const LeftDock = () => (
  <div className="flex w-[300px] shrink-0 flex-col text-[12px] tracking-[-0.350px] text-[#161616]">
    <DockTitle>Przeglądarka</DockTitle>
    <div className="flex h-[31px] shrink-0 items-center gap-[10px] pl-[7px]">
      <S s={16}><path d="M1.500 2h17v17h-17z" fill="#f1f1f1" stroke="#c5c5c5" /><circle cx="19" cy="19" r="3.500" fill="#fff" stroke="#6a9b6a" strokeWidth="2" /></S>
      <RefreshIcon s={16} /><S s={16}><Funnel /></S><S s={16}><TreeArrow /></S>
      <S s={16}><g transform="translate(-.5 -.5) scale(1.250)"><InfoBall /></g></S>
    </div>
    <div className="flex h-[55px] w-[294px] shrink-0 flex-col overflow-hidden rounded-[3px] border border-[#333] bg-[#b1b1b1] p-px">
      <div className="flex h-[42px] shrink-0">
        <div className="h-[42px] grow overflow-hidden">
          <div className="flex h-[18px] items-center pl-[20px]"><S s={15}><path d="m12 1 3.300 7.500 8 .8-6 5.400 1.700 8-7-4.200-7 4.200 1.700-8-6-5.400 8-.8z" fill="#fbf04b" stroke="#c9a516" /></S><span className="pt-[2px] pl-[6px]">Ulubione</span></div>
          <div className="flex h-[18px] items-center pl-[6px]"><svg width="5" height="6"><path d="M0 0v6l5-3z" fill="#6a6a6a" /></svg><span className="ml-[9px]"><S s={15}><path d="M2 3h20v17H5l-3 2z" fill="#e8e8e8" stroke="#999" /><path d="M5.500 3v17" stroke="#b0b0b0" /><path d="M13 2h5v9l-2.500 2L13 11z" fill="#5e8fc9" /></S></span><span className="pt-[2px] pl-[6px] tracking-[-0.450px]">Zakładki przestrzenne</span></div>
          <div className="mt-1 ml-5 h-3 w-2 bg-[#b6d32d]" />
        </div>
        <div className="w-[10px] shrink-0 bg-[#363636]"><div className="h-[17px] border border-[#333] bg-[#717171]" /></div>
      </div>
      <div className="flex h-[10px] shrink-0 bg-[#363636]"><div className="w-[157px] border border-[#333] bg-[#717171]" /><div className="grow" /><div className="w-[10px] bg-[#b1b1b1]" /></div>
    </div>
    <div className="h-[6px] shrink-0" />
    <DockTitle>Warstwy</DockTitle>
    <div className="flex h-[31px] shrink-0 items-center gap-[10px] pl-[7px]">
      <S s={16}><path d="m22 2-9 10" stroke="#e0a82e" strokeWidth="4" /><path d="m1 9 8-3 9 8-8 9z" fill="#e5844a" /><path d="m2 10 12 11" stroke="#f6d040" strokeWidth="3" /><path d="m9 6 9 8" stroke="#b33c2e" strokeWidth="2.500" /></S>
      <S s={16}><path d="M2 8h15v14H2z" stroke="#ddd" strokeWidth="2" /><path d="M7 3h12v14H7z" fill="#888" stroke="#fff" strokeWidth="1.500" /><path d="M12 15V1M8 12h9" stroke="#234b7a" strokeWidth="2" /><circle cx="19" cy="19" r="4" fill="#fff" stroke="#4c9a57" strokeWidth="2" /></S>
      <S s={17}><path d="M1 12c5-8 15-8 20 0-5 7-15 7-20 0z" fill="#eaf2fb" stroke="#333" strokeWidth="1.300" /><circle cx="11" cy="11" r="4.500" fill="#4c82c3" /><circle cx="11" cy="11" r="2" fill="#111" /><path d="M14 17h9l-4.500 5z" fill="#222" /></S>
      <S s={16}><Funnel /><path d="M13 16h10l-5 5.500z" fill="#222" /></S>
      <S s={16}><path d="M11 3.500C7 0 2 2 3 5.500 3.500 7.500 6 8 8 8 4 8 1 10 2 13c1 3.500 7 3.500 10 .5" stroke="#6d4680" strokeWidth="2" /><path d="M12 12.500h11l-4 4.500v6h-3v-6z" fill="#e6e6e6" stroke="#888" strokeWidth=".6" /></S>
      <svg width="5" height="5"><path d="M0 0h5L2.500 5z" fill="#b4b4b4" /></svg>
      <S s={16}><TreeArrow down /></S><S s={16}><TreeArrow /></S>
      <S s={16}><path d="M1.500 1.500h17v17h-17z" fill="#f1f1f1" stroke="#c5c5c5" /><rect x="13" y="15" width="10" height="7" rx="2" fill="#e34a4a" /><path d="M15 18.500h6" stroke="#fff" strokeWidth="2" /></S>
    </div>
    <div className="flex h-[497px] w-[294px] shrink-0 rounded-[3px] border border-[#333] bg-[#b1b1b1] p-px">
      <div className="w-[280px] shrink-0">
        {top.map((l) => <LayerRow key={l.n} l={l} open={l.k === "poly"} />)}
        {kids.map((k) => (
          <div key={k.c} className="flex h-6 items-center pl-[44px]">
            <Check on={k.on} />
            <svg width="18" height="18" className="ml-[7px] mr-1.5"><rect x=".5" y=".5" width="17" height="17" fill={k.c} stroke="#333" strokeOpacity=".7" /></svg>
            <span className="pt-[2px] tracking-[-0.430px]">{k.n}</span>
          </div>
        ))}
        {rest.map((l) => <LayerRow key={l.n} l={l} />)}
      </div>
      <div className="w-[10px] bg-[#363636]"><div className="h-[403px] border border-[#333] bg-[#717171]" /></div>
    </div>
    <div className="h-[6px] shrink-0" />
    <DockTitle>Statystyki</DockTitle>
    <div className={combo + " h-[25px] w-[294px] shrink-0 pl-1 pr-[6px]"}>
      <svg width="17" height="14" fill="none"><path d="M2 2.500 5.500 12 10 1.500h5" stroke="#b0b0b0" strokeWidth=".8" /><g fill="#e5e5e5"><circle cx="2" cy="3" r="1.100" /><circle cx="5.500" cy="12" r="1.100" /><circle cx="10" cy="1.800" r="1.100" /><circle cx="15" cy="1.800" r="1.100" /></g></svg>
      <span className="grow pt-[2px] pl-[4px] tracking-[-0.400px]">railroads</span><Tri />
    </div>
    <div className="mt-[2px] flex w-[294px] shrink-0 justify-between">
      <div className={combo + " h-[25px] w-[263px] pl-1 pr-[6px]"}><span className="w-[22px] text-[9px] font-bold tracking-[0.200px] text-[#5c5c5c]">123</span><span className="grow pt-[2px] tracking-[-0.480px]">vertex</span><Tri /></div>
      <div className="flex h-[25px] w-[25px] items-center justify-center rounded border border-[#333] bg-[#949494]"><S s={13}><path d="M19 6C15 0 4 1 5 6.500 5.500 10 10 11 14 11 8 11 3 13 4 18c1.500 6 13 5 16-.5M11 11h5" stroke="#704a80" strokeWidth="3" /></S></div>
    </div>
    <div className="mt-[3px] flex h-[42px] w-[294px] shrink-0 overflow-hidden rounded-t-[3px] border border-b-0 border-[#333] bg-[#b1b1b1] p-px pb-0">
      <div className="grid h-[50px] w-[280px] grid-cols-[188px_59px] grid-rows-[20px_30px]">
        <div className="border-r border-b border-[#333] bg-[#717171] text-center leading-[21px]">Statystyka</div>
        <div className="border-b border-[#333] bg-[#717171] text-center leading-[21px] font-bold tracking-[-0.200px]">Wartość</div>
        <div className="border-r border-[#8b8b8b] pt-[9px] pl-[3px] leading-4">Licz</div>
        <div className="border-r border-[#8b8b8b] pt-[9px] pl-[2px] leading-4">84</div>
      </div>
      <div className="w-[10px] bg-[#363636]"><div className="h-[22px] border border-[#333] bg-[#717171]" /></div>
    </div>
  </div>
);

/* ---------- map ---------- */

const MapCanvas = () => (
  <svg width="1053" height="746" viewBox="363 190 1053 746" className="block" fill="none" strokeLinejoin="round">
    <path d="M363 190h1053v746H363z" fill="#bdcf4e" />
    <path d="m363 792.500 70.500-3 3.500 80.500 80-4 1.300 28" stroke="#26281a" strokeWidth="1.200" />
    <path d="m1073.500 881 5 55" stroke="#26281a" strokeWidth="1.200" />
    <g fill="#fff" stroke="#2b2d20" strokeWidth="1">
      <path d="M490 938 494 922 498 916 503 906 510 899 518 893 523 889 520 886 524 883 525 888 538 886 546 879 562 872 572 865 581 860 584 853 583 842 584 836 587 836 589 845 594 850 600 851 601 840 606 840 608 835 610 846 614 854 660 860 728 872 727 889 719 896 718 900 722 905 729 907 748 921 760 929 773 938z" />
      <path d="m1143 938 1-10-1-10 5-16 4 11 1 10 6 3-1 12zM1168 938l8-16 4-1-2-21 4-11 8-12h18l-3 9-8 13-8 8 3 8-3 14 1 8zM1272 938l1-9-9 2 1-4 9-1-2-4 6-27-1-18h9l1 13 8 5-5 5-4-2-1 13 3 14-2 13z" />
      <path d="m1299 938-2-8-2-6 3 2 4 5 5-5 3-5 4-1 1 5-10 3-5 10zM1341 938l-2-8 4-6 2-2-3 8 2 9 4-7 5-2 2-7-3-5 3 1 3 7-4 12zM1368 938l-1-8 5 3 4-4 4-12 8 5 8 3 3 1 3-7 6-3 3-5 0 3-4 6 4 6 0 5-3 2-6-3 0 9z" />
    </g>
    <path d="M684 897c4-3 8-4 13-4 1 5-1 10-4 15-3 3-4 6-7 9-4 2-10 4-14 2 2-2 6-2 8-5 1-6 2-12 4-17z" fill="#bdcf4e" stroke="#2b2d20" />
    <path d="M751 891c2 7 9 6 10 13s0 14 3 20l10 12" stroke="#8f86a0" />
    <g stroke="#f0a02c" strokeWidth="1.100">
      <path d="M722 190c-8 5-8 14-16 18s-5 10-10 15-9 12-13 21" />
      <path d="M615 723c-7 2-11 5-13 12-4 4-5 14-2 19s7 5 10 7c2 8-4 13-6 19-2 5-4 6-3 7l-7 4c-2 6 6 8 2 13-5 6-3 9-4 15s-7 10-5 21l1 5" />
      <path d="M606 726c-2 6-6 8-3 12 6 4 0 9 5 14l2 7M610 762c-4 8 2 11-3 16s-4 6-1 9c4 6 2 10-1 13s-5 4-5 8M613 811c-4 4-8 7-7 13l2 12-4 4" />
    </g>
    <path d="M723 193c-9 5-8 14-17 19s-10 15-13 17-4 8-7 14" stroke="#93869f" strokeWidth=".8" />
  </svg>
);

/* ---------- dialogs ---------- */

const field = "rounded border border-[#363636] bg-[#b1b1b1]";
const btn = "flex items-center justify-center rounded border border-[#363636] bg-linear-to-b from-[#9b9b9b] to-[#878787]";

const BackDialog = () => (
  <div className="absolute top-[120px] left-[255px] flex h-[602px] w-[900px] flex-col border border-[#777d50] border-b-[#4c4c4c] bg-[#717171] shadow-[0_2px_14px_rgba(0,0,0,0.45)]">
    <div className="h-[30px] shrink-0 bg-white" />
    <div className="mt-[32px] h-[25px] shrink-0 border border-[#232323] bg-linear-to-b from-[#535353] to-[#383838]" />
    <div className="mt-1 h-px shrink-0 bg-[#555]" />
    <div className="mt-[18px] flex flex-col gap-[6px]">
      {[0, 1, 2, 3, 4].map((i) => <div key={i} className="h-[22px] border border-[#363636] bg-[#b1b1b1]" />)}
      <div className="h-[22px] border border-[#232323] bg-linear-to-b from-[#535353] to-[#383838]" />
    </div>
    <div className="mt-[295px] h-px shrink-0 bg-[#555]" />
    <div className="ml-[3px] mt-[5px] h-[24px] w-[150px] shrink-0 rounded border border-[#333] bg-[#7a7a7a]" />
  </div>
);

const Spin = ({ v, off, w }: { v: string; off?: boolean; w: string }) => (
  <div className={(off ? "flex items-center rounded border border-[#363636] text-[#929292]" : combo) + " h-[21px] justify-between pr-[5px] pl-[7px] " + w}>
    <span className="pt-[3px]">{v}</span>
    <svg width="6" height="12"><path d="M3 0 6 5H0zM3 12l3-5H0z" fill={off ? "#a5a5a5" : "#c4c4c4"} /><path d="M1 6h4" stroke="#a8a8a8" /></svg>
  </div>
);

const groups = ["Data i czas", "Funkcje agreguj...", "General", "Geometria", "Kolor", "Konwersja", "Luźne dopasow...", "Mapy wartości", "Matematyczne", "Operatory", "Ostatnio użyte (f...", "Pliki i ścieżki", "Pola i wartości", "Rastry", "Tablice", "tekst", "Warstwy mapy", "Wiersz i atrubuty", "Wyrażenia waru..."];

const Dots = () => (
  <div className="flex w-[3px] flex-col gap-px pt-[156px]">
    {[0, 1, 2, 3, 4, 5, 6, 7, 8].map((i) => <i key={i} className="block h-px w-[2px] bg-[#a9a9a9]" />)}
  </div>
);

const toolBtn = "flex size-[25px] items-center justify-center rounded border border-[#363636]";

const FieldCalculator = () => (
  <div className="absolute top-[83px] left-[250px] flex h-[629px] w-[683px] flex-col border border-[#4c4c3c] bg-[#717171] text-[11px] tracking-[-0.280px] text-[#161616] shadow-[0_2px_14px_rgba(0,0,0,0.55)]">
    <div className="flex h-[30px] shrink-0 items-center bg-white pr-[9px] pl-[7px] text-[12px] tracking-[-0.350px] text-black">
      <QgisLogo s={18} /><span className="grow pl-[4px]">railroads — Kalkulator pól</span>
      <svg width="12" height="12" fill="none"><path d="m1 1 10 10M11 1 1 11" stroke="#111" strokeWidth="1.100" /></svg>
    </div>
    <div className="mt-3 flex h-4 shrink-0 items-center pl-3"><Check faded /><span className="pt-0.5 pl-[6px] text-[#979797]">Aktualizuj tylko 0 zaznaczone obiekty</span></div>
    <div className="mt-[7px] flex h-4 shrink-0 items-center pl-3 font-bold tracking-[0.140px]">
      <div className="flex w-[346px] items-center"><Check on plain /><span className="pt-[2px] pl-2">Twórz nowe pole</span></div>
      <Check plain /><span className="pt-[2px] pl-2">Aktualizuj istniejące pole</span>
    </div>
    <div className="mt-[15px] flex h-[93px] shrink-0">
      <div className="flex w-[361px] shrink-0 flex-col pl-[14px]">
        <div className="flex h-4 items-center pl-[2px]"><Check plain /><span className="pt-[2px] pl-[6px] tracking-[-0.400px]">Twórz pole wirtualne</span></div>
        <div className="mt-[4px] flex h-[22px] items-center"><span className="w-[132px] pt-[3px]">Nazwa</span><div className={field + " h-[22px] w-[201px] pl-1 leading-[22px]"}>vertrex</div></div>
        <div className="mt-[3px] flex h-[22px] items-center"><span className="w-[132px] pt-[3px]">Typ</span><div className={combo + " h-[22px] w-[201px] pr-[6px] pl-[3px]"}><span className="grow pt-[3px]">Liczba całkowita (integer)</span><Tri /></div></div>
        <div className="mt-[3px] flex h-[21px] items-center"><span className="w-[132px] pt-px whitespace-nowrap">Długość pola wyjściowego</span><Spin v="10" w="w-[67px]" /><span className="w-[67px] pt-px pl-[5px]">Dokładność</span><Spin v="3" off w="w-[67px]" /></div>
      </div>
      <div className="mt-[33px] flex h-6 w-[305px] items-center justify-end rounded border border-[#232323] pr-[6px]"><Tri /></div>
    </div>
    <div className="mt-[5px] ml-[11px] flex h-6 w-[659px] shrink-0 items-end">
      <div className="h-6 w-[85px] border border-b-0 border-[#363636] pr-px text-center leading-[24px]">Wyrażenie</div>
      <div className="h-[18px] w-[99px] border border-l-0 border-[#363636] pr-px text-center leading-[18px]">Edytor funkcji</div>
      <div className="h-px grow bg-[#363636]" />
    </div>
    <div className="mt-[9px] ml-[21px] flex h-[326px] shrink-0">
      <div className="flex w-[224px] shrink-0 flex-col">
        <div className="flex gap-[2px]">
          <div className={toolBtn + " bg-[#949494]"}><S s={16}><Page /></S></div>
          <div className={toolBtn + " bg-[#949494]"}><S s={16}><Floppy /></S></div>
          <div className={toolBtn}><S s={16} dim><Page /><Pencil fill="#555" x={3} /></S></div>
          <div className={toolBtn}><S s={14} dim><Bin /></S></div>
          <div className={toolBtn + " bg-[#949494]"}><S s={18}><path d="M12 1v8h4l-4 5-4-5h4" stroke="#3d6fa6" strokeWidth="2" fill="#4a80bb" /><path d="M1 16h6l1.500 2.500h7L17 16h6v6H1z" fill="#6b98cb" stroke="#2f5b8d" /></S></div>
          <div className={toolBtn + " bg-[#949494]"}><S s={18}><path d="M1 16h6l1.500 2.500h7L17 16h6v6H1z" fill="#6b98cb" stroke="#2f5b8d" /><path d="m12 1 5 6h-3.500v9h-3V7H7z" fill="#fbe728" stroke="#b59c12" strokeWidth=".7" /></S></div>
        </div>
        <div className="mt-[6px] h-[213px] shrink-0 border border-[#505050] bg-[#1f1f1f] font-['Liberation_Mono',monospace] text-[13.300px] tracking-normal text-[#a6e070]">
          <div className="flex h-[18px] items-center bg-[#323232] pl-px leading-[20px] whitespace-pre">num_points<span className="h-[18px] bg-[#b5ff00] text-[#44601c]">(</span><span className="text-[#e8e8e8]">$</span>geometry<span className="h-[18px] bg-[#b5ff00] text-[#44601c]">)</span></div>
        </div>
        <div className="mt-[6px] flex gap-[2px]">
          {[["=", "w-[18px]"], ["+", "w-[18px]"], ["-", "w-[14px]"], ["/", "w-[14px]"], ["*", "w-4"], ["^", "w-[18px]"], ["||", "w-[18px]"], ["(", "w-[14px]"], [")", "w-[14px]"], ["'\\n'", "w-6"]].map(([t, w]) => (
            <div key={t} className={btn + " h-[23px] shrink-0 pt-px " + w}>{t}</div>
          ))}
        </div>
        <div className="mt-[9px] flex h-[25px] items-center">
          <span className="w-[37px] pt-[2px]">Obiekt</span>
          <div className={combo + " h-[22px] w-[125px] pr-[6px] pl-[5px]"}><span className="grow pt-[2px]">Operational</span><Tri /></div>
          <div className={toolBtn + " ml-[6px]"}><svg width="10" height="14"><path d="M9 1v12L1 7z" fill="#7d8186" stroke="#646a70" /></svg></div>
          <div className={btn + " ml-[6px] h-[25px] w-[25px]"}><svg width="11" height="15"><path d="M1 1v13l9-6.500z" fill="#75a5da" stroke="#3d6a9b" /></svg></div>
        </div>
        <div className="mt-[5px] flex gap-[6px]"><span>Podgląd:</span><span>22</span></div>
      </div>
      <div className="flex w-[22px] shrink-0 justify-center pl-[3px]"><Dots /></div>
      <div className="flex w-[139px] shrink-0 flex-col">
        <div className="flex justify-between text-[#8f8f8f]">
          <div className="flex h-[23px] w-[61px] items-center rounded border border-[#363636] bg-[#b1b1b1] pl-[7px]"><S s={14}><circle cx="10" cy="10" r="7.500" stroke="#8d8d8d" strokeWidth="2.200" /><path d="m15.500 15.500 7 7" stroke="#8d8d8d" strokeWidth="2.600" /></S><span className="pt-px pl-[8px] text-[#5d5d5d]">Sz...</span></div>
          <div className="flex h-[23px] w-[72px] items-center justify-center rounded border border-[#363636] pt-px pr-px tracking-[-0.500px] text-[#989898]">Pokaż pomoc</div>
        </div>
        <div className="mt-[6px] flex h-[297px] rounded border border-[#363636] bg-[#b1b1b1] p-px text-[12px] tracking-[-0.300px] text-[#111]">
          <div className="h-[293px] w-[125px] shrink-0 overflow-hidden">
            <div className="h-[15px] pl-[23px] leading-[15px] font-bold tracking-[-0.500px]">row_number</div>
            {groups.map((g) => (
              <div key={g} className="flex h-[15px] items-center pl-[8px] whitespace-nowrap"><svg width="5" height="5"><path d="M0 0v5l5-2.500z" fill="#696969" /></svg><span className="pl-[10px] leading-[15px]">{g}</span></div>
            ))}
          </div>
          <div className="w-[10px] bg-[#363636]"><div className="h-[265px] border border-[#333] bg-[#717171]" /></div>
        </div>
      </div>
      <div className="flex w-[13px] shrink-0 pl-[2px]"><Dots /></div>
      <div className={field + " w-[241px]"} />
    </div>
    <div className="mt-[40px] flex h-[23px] shrink-0 justify-end gap-[6px] pr-[11px]">
      <div className={btn + " w-6 pt-px"}>OK</div>
      <div className={btn + " w-10 pt-px"}>Anuluj</div>
      <div className={btn + " w-[41px] pt-px tracking-[-0.500px]"}>Pomoc</div>
    </div>
  </div>
);

/* ---------- shell ---------- */

const Menu = () => (
  <div className="flex h-5 shrink-0 bg-[#373737] pl-[10px] text-[12px] leading-[22px] tracking-[-0.350px] whitespace-nowrap text-[#b9b9b9]">
    <span className="w-[51px]">Projekt</span>
    <span className="w-12"><u>E</u>dycja</span>
    <span className="w-12"><u>W</u>idok</span>
    <span className="w-[59px]">W<u>a</u>rstwa</span>
    <span className="w-[71px]"><u>U</u>stawienia</span>
    <span className="w-[55px]"><u>W</u>tyczki</span>
    <span className="w-[52px]">Wekt<u>o</u>r</span>
    <span className="w-[46px]"><u>R</u>aster</span>
    <span className="w-20"><u>B</u>aza danych</span>
    <span className="w-20">W <u>i</u>nternecie</span>
    <span className="w-[45px]">Siatka</span>
    <span className="w-[71px]">Pro<u>c</u>essing</span>
    <span><u>P</u>omoc</span>
  </div>
);

export default function App() {
  return (
    <div className="flex h-[936px] w-[1416px] overflow-hidden bg-[#717171] font-['Open_Sans','Noto_Sans',sans-serif]">
      <svg width="0" height="0" className="absolute">
        <defs>
          <radialGradient id="lens" cx=".4" cy=".35"><stop offset="0" stopColor="#fff" /><stop offset="1" stopColor="#d6d6d6" /></radialGradient>
          <linearGradient id="edge" x1="0" y1="1" x2="1" y2="0"><stop offset="0" stopColor="#0c59a4" /><stop offset=".5" stopColor="#22b1d8" /><stop offset="1" stopColor="#6be06a" /></linearGradient>
        </defs>
      </svg>
      <Taskbar />
      <div className="flex w-[1354px] shrink-0 flex-col">
        <div className="flex h-[23px] shrink-0 items-center bg-white pl-[1px] text-[12px] tracking-[-0.380px] text-[#8b8b8b]"><QgisLogo s={18} /><span className="pt-px pl-[4px]">*qgis — QGIS</span></div>
        <Menu />
        <div className="h-[117px] shrink-0"><RowOne /><RowTwo /><RowThree /></div>
        <div className="flex h-[776px] shrink-0">
          <LeftDock />
          <div className="relative h-[776px] w-[1054px] shrink-0 overflow-hidden border-l border-[#454545]">
            <div className="flex h-[30px] items-center border-t border-b border-t-[#9aa693] border-b-[#a9bf9f] bg-[#dff0d8] pl-[9px] text-[11px] text-black">
              <svg width="25" height="20" viewBox="0 0 25 20"><path d="M1 9c3 0 5 1 7 4C12 7 17 3 24 1 18 6 13 12 9 19 7 15 4 11 1 9z" fill="#2fae3a" stroke="#136b1c" /></svg>
              <span className="pt-[2px] pl-[9px] font-bold tracking-[0.150px]">Warstwa wyeksportowana:</span>
              <span className="pt-[2px] pl-[2px] tracking-[-0.350px]">Zapisano warstwę wektorową do <u className="text-[#1c6b1c]">bristol_buildings.shp</u></span>
            </div>
            <MapCanvas />
            <BackDialog />
            <FieldCalculator />
          </div>
        </div>
      </div>
    </div>
  );
}
